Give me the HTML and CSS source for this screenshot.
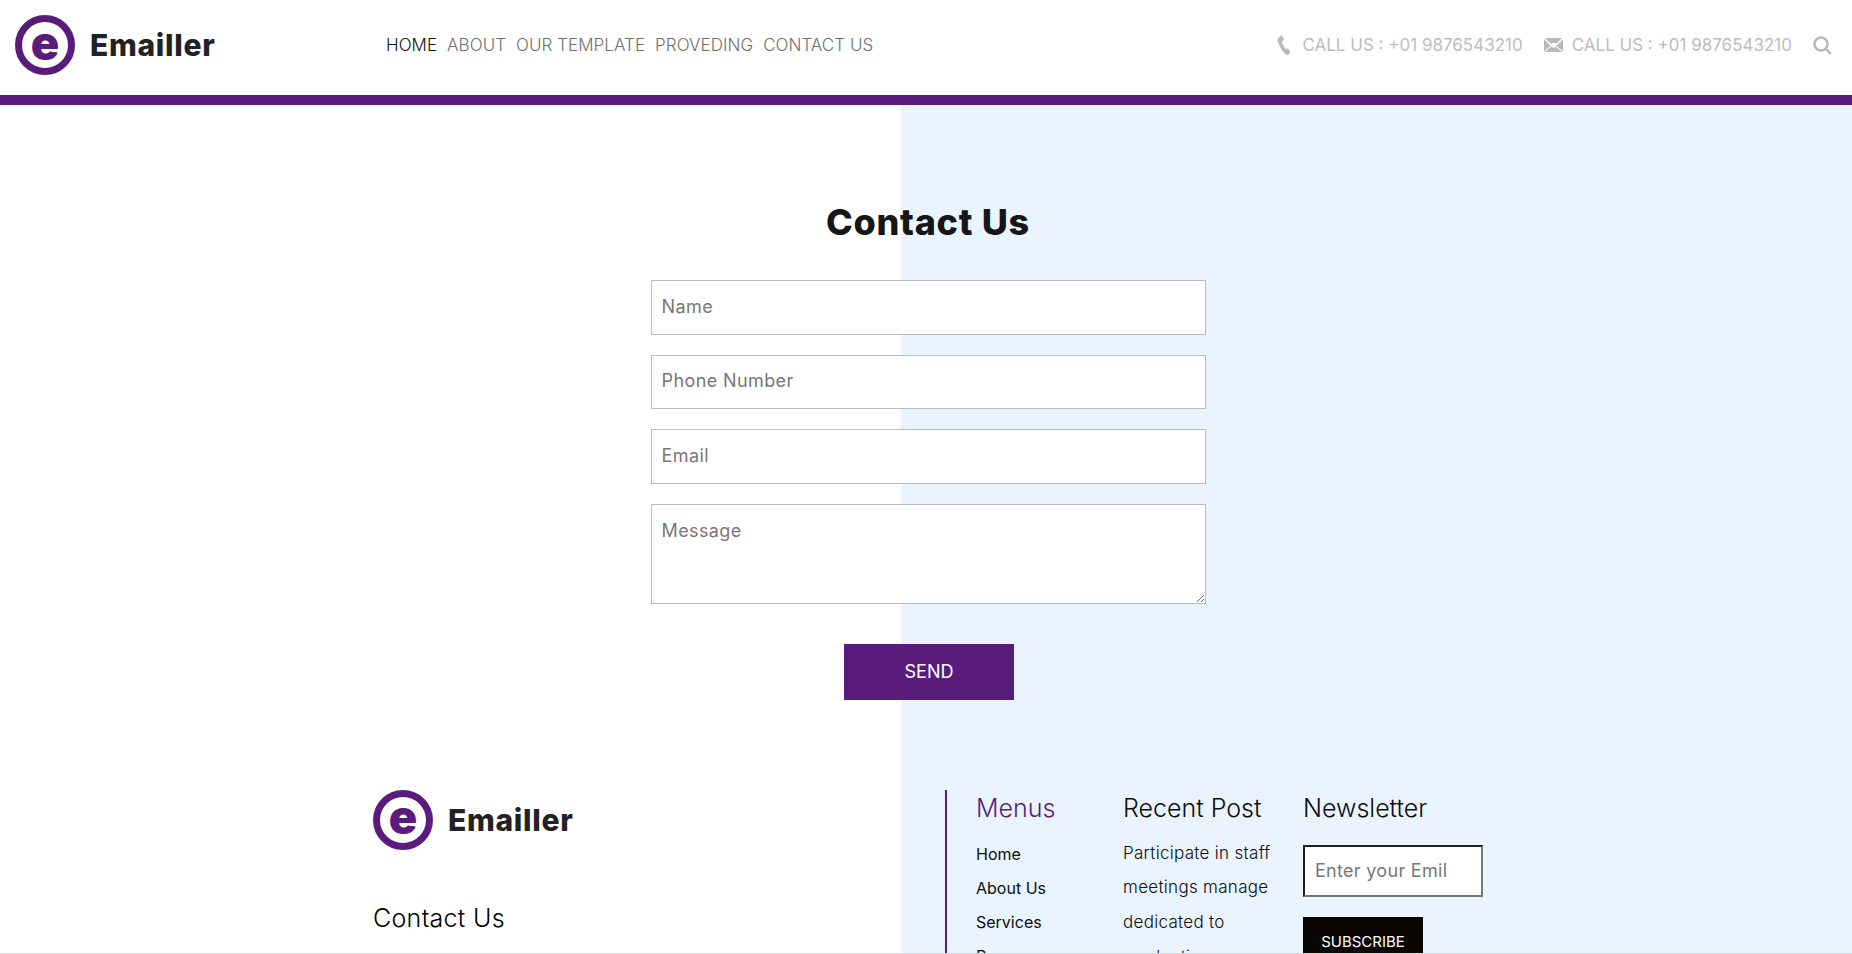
FILE: index.html
```html
<!DOCTYPE html>
<html lang="en">
<head>
    <meta charset="UTF-8" />
    <meta name="viewport" content="width=device-width, initial-scale=1.0" />
    <title>Emailler - Contact Us</title>
    <link rel="stylesheet" href="styles.css">
</head>
<body>
    <div class="page">
        <header class="topbar">
            <a class="brand brand-top" href="#">
                <span class="logo-ring"><span class="logo-e">e</span></span>
                <span class="brand-name">Emailler</span>
            </a>
            <nav class="main-nav">
                <a class="active" href="#">HOME</a>
                <a href="#">ABOUT</a>
                <a href="#">OUR TEMPLATE</a>
                <a href="#">PROVEDING</a>
                <a href="#">CONTACT US</a>
            </nav>
            <div class="top-contact">
                <span class="call">
                    <svg class="phone-icon" viewBox="0 0 14 20"><path d="M1 3.500 4 .8c.5-.4 1-.3 1.300.2l1.600 3.300c.2.500.1.900-.3 1.200L5 6.600c-.3.300-.4.600-.2 1l3.200 6c.2.400.5.500.9.400l1.500-.4c.5-.1.900.1 1.100.5l1.700 3c.2.500.1.900-.3 1.200l-1.800 1.300c-1 .6-2 .3-2.700-.5C5 15.500 2.500 11 1 7.500.5 6 .400 4.500 1 3.500Z"/></svg>
                    CALL US : +01 9876543210
                </span>
                <span class="call">
                    <svg class="mail-icon" viewBox="0 0 19 14"><path d="M0 1.500 6.800 7.800 0 13.200ZM19 1.500 12.200 7.800 19 13.200ZM7.600 8.500 9.500 10.200 11.400 8.500 18.400 14H.6ZM.8 0H18.200L12 5.800A4 4 0 0 0 7 5.800Z"/></svg>
                    CALL US : +01 9876543210
                </span>
                <svg class="search-icon" viewBox="0 0 19 19"><circle cx="8" cy="8" r="6.500"/><path d="m12.800 12.800 5 5"/></svg>
            </div>
        </header>

        <main class="contact">
            <h1>Contact Us</h1>
            <form class="contact-form">
                <input type="text" placeholder="Name">
                <input type="text" placeholder="Phone Number">
                <input type="text" placeholder="Email">
                <textarea placeholder="Message"></textarea>
                <button type="button" class="send-btn">SEND</button>
            </form>
        </main>

        <footer class="footer">
            <div class="foot-left">
                <a class="brand" href="#">
                    <span class="logo-ring"><span class="logo-e">e</span></span>
                    <span class="brand-name">Emailler</span>
                </a>
                <h3 class="foot-contact">Contact Us</h3>
            </div>
            <div class="foot-right">
                <div class="col-menus">
                    <h3 class="menus-title">Menus</h3>
                    <ul>
                        <li>Home</li>
                        <li>About Us</li>
                        <li>Services</li>
                        <li>Pages</li>
                    </ul>
                </div>
                <div class="col-post">
                    <h3>Recent Post</h3>
                    <p>Participate in staff<br>meetings manage<br>dedicated to<br>production</p>
                </div>
                <div class="col-news">
                    <h3>Newsletter</h3>
                    <input type="text" class="news-input" placeholder="Enter your Emil">
                    <button type="button" class="sub-btn">SUBSCRIBE</button>
                </div>
            </div>
        </footer>
    </div>
</body>
</html>
```

FILE: styles.css
```css
html, body {
    height: 100%;
    margin: 0;
    padding: 0;
    overflow: hidden;
}

body {
    font-family: Inter, "Open Sans", sans-serif;
    color: #0c0c0c;
}

a {
    text-decoration: none;
    color: inherit;
}

.page {
    height: 953px;
    overflow: hidden;
    border-bottom: 1px solid #d6d6d6;
    background: linear-gradient(to right, #fff 901px, #e9f4fe 901px);
}

/* top bar */
.topbar {
    height: 105px;
    box-sizing: border-box;
    display: flex;
    align-items: center;
    padding: 0 20px 5px 15px;
    background: #fff;
    border-bottom: 10px solid #5a1c7c;
}

.brand {
    display: flex;
    align-items: center;
    gap: 15px;
}

.brand-top {
    width: 371px;
}

.logo-ring {
    width: 60px;
    height: 60px;
    box-sizing: border-box;
    border: 7px solid #5a1c7c;
    border-radius: 50%;
    display: flex;
    align-items: center;
    justify-content: center;
}

.logo-e {
    font-size: 47px;
    font-weight: 900;
    line-height: 1;
    color: #5a1c7c;
    position: relative;
    top: -3px;
}

.brand-name {
    font-size: 30px;
    font-weight: 800;
    letter-spacing: 0.7px;
    color: #222;
}

.main-nav {
    display: flex;
    gap: 10px;
    font-size: 17px;
    font-weight: 300;
    letter-spacing: 0.05px;
    color: #6f6f6f;
}

.main-nav .active {
    color: #111;
}

.top-contact {
    margin-left: auto;
    display: flex;
    align-items: center;
    font-size: 17px;
    color: #bdbdbd;
}

.call {
    display: flex;
    align-items: center;
    gap: 9px;
    margin-right: 21px;
}

.phone-icon {
    width: 14px;
    height: 20px;
    fill: #b9b9b9;
    margin-right: 2px;
}

.mail-icon {
    width: 19px;
    height: 14px;
    fill: #b9b9b9;
}

.search-icon {
    width: 19px;
    height: 19px;
    fill: none;
    stroke: #b9b9b9;
    stroke-width: 2.500;
}

/* contact form */
.contact {
    padding: 92px 0 0 4px;
    display: flex;
    flex-direction: column;
    align-items: center;
}

.contact h1 {
    margin: 0 0 33px;
    font-size: 36px;
    line-height: 50px;
    font-weight: 800;
    letter-spacing: 0.7px;
    color: #161616;
}

.contact-form {
    width: 555px;
    display: flex;
    flex-direction: column;
    gap: 20px;
}

.contact-form input,
.contact-form textarea {
    box-sizing: border-box;
    width: 100%;
    height: 54.6px;
    padding: 0 10px 2px;
    font-family: inherit;
    font-size: 18px;
    letter-spacing: 0.4px;
    background: #fff;
    border: 1px solid #bbb;
    border-radius: 0;
    outline: none;
}

.contact-form textarea {
    height: 100px;
    padding-top: 15px;
    display: block;
}

input::placeholder,
textarea::placeholder {
    color: #777;
}

.send-btn {
    align-self: center;
    width: 170px;
    height: 56px;
    margin: 20px 0 0 2px;
    border: none;
    background: #5a1c7c;
    color: #fff;
    font-family: inherit;
    font-size: 18px;
    cursor: pointer;
}

/* footer */
.footer {
    margin-top: 90px;
    margin-left: 373px;
    display: flex;
}

.foot-left {
    width: 572px;
}

.foot-contact {
    margin: 53px 0 0;
    font-size: 25px;
    font-weight: 300;
    letter-spacing: 0.3px;
    color: #000;
}

.foot-right {
    display: flex;
    border-left: 2px solid #5a1c7c;
    padding-left: 29px;
    height: 300px;
}

.foot-right h3 {
    margin: 0 0 9px;
    font-size: 25px;
    line-height: 36px;
    font-weight: 300;
}

.foot-right .menus-title {
    color: #5a1c7c;
}

.col-menus {
    width: 147px;
}

.col-post {
    width: 180px;
}

.col-menus ul {
    list-style: none;
    margin: 11px 0 0;
    padding: 0;
    font-size: 16px;
    line-height: 34px;
}

.col-post p {
    margin: 10px 0 0;
    font-size: 17px;
    font-weight: 300;
    letter-spacing: 0.3px;
    line-height: 34.7px;
}

.col-news {
    display: flex;
    flex-direction: column;
    align-items: flex-start;
}

.news-input {
    box-sizing: border-box;
    width: 180px;
    height: 52px;
    margin-top: 10px;
    padding: 0 10px;
    font-family: inherit;
    font-size: 18px;
    letter-spacing: 0.3px;
    background: #fff;
    border: 2px inset #767676;
}

.sub-btn {
    width: 120px;
    height: 50px;
    margin-top: 20px;
    border: none;
    background: #0a0604;
    color: #fff;
    font-family: inherit;
    font-size: 15px;
}
```
